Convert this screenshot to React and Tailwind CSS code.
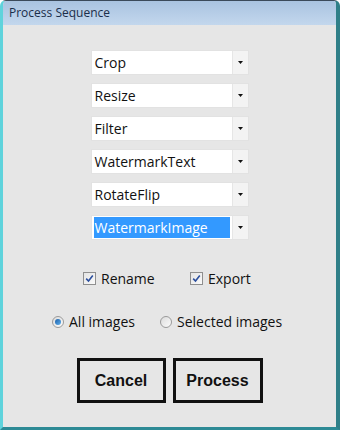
import { useState } from 'react';

const steps = ['Crop', 'Resize', 'Filter', 'WatermarkText', 'RotateFlip', 'WatermarkImage'];

const Dropdown = ({ value, selected }) => (
  <div className="flex h-[25px] w-[158px] items-stretch border border-[#e2e2e2] bg-white">
    <div className="flex flex-1 items-center px-[2px]">
      <span
        className={`flex h-[21px] w-full items-center px-[1px] text-[14px] leading-none ${
          selected ? 'bg-[#3399ff] text-white' : 'text-[#111]'
        }`}
      >
        {value}
      </span>
    </div>
    <div className="flex w-[16px] items-center justify-center border-l border-[#e6e6e6] bg-[#f3f3f3]">
      <svg width="5" height="3" viewBox="0 0 5 3">
        <path d="M0 0H5L2.5 3Z" fill="#111" />
      </svg>
    </div>
  </div>
);

const Checkbox = ({ label, checked }) => (
  <label className="flex items-center gap-[5px] text-[14px] text-[#111]">
    <span className="flex h-[13px] w-[13px] items-center justify-center border border-[#8f8f8f] bg-gradient-to-br from-[#e4e4e4] to-[#fafafa]">
      {checked && (
        <svg width="9" height="9" viewBox="0 0 9 9">
          <path d="M1.2 4.6 3.5 7 7.8 1.6" fill="none" stroke="#2c4f9e" strokeWidth="1.6" />
        </svg>
      )}
    </span>
    {label}
  </label>
);

const Radio = ({ label, checked }) => (
  <label className="flex items-center gap-[5px] text-[14px] text-[#111]">
    <span className="flex h-[12px] w-[12px] items-center justify-center rounded-full border border-[#9a9a9a] bg-gradient-to-br from-[#dcdcdc] to-[#fbfbfb]">
      {checked && <span className="h-[6px] w-[6px] rounded-full bg-gradient-to-br from-[#1a5fa8] to-[#5fb0ee]" />}
    </span>
    {label}
  </label>
);

const App = () => {
  const [values] = useState(steps);

  return (
    <div
      className="flex h-[430px] w-[340px] flex-col overflow-hidden rounded-t-[6px] border-b-[3px] border-l-[3px] border-r-[4px] border-t border-b-[#2d8a95] border-l-[#5fd3dc] border-r-[#2f7f88] border-t-[#3b4a5a] bg-[#e6e6e6]"
      style={{ fontFamily: '"Open Sans", "Noto Sans", sans-serif' }}
    >
      <div className="flex h-[24px] items-center bg-gradient-to-b from-[#a9c3e0] to-[#c3d7ed] px-[6px] text-[12px] text-[#1b2e4a]">
        Process Sequence
      </div>

      <div className="flex flex-1 flex-col items-center pt-[25px]">
        <div className="flex flex-col gap-[8px]">
          {values.map((v, i) => (
            <Dropdown key={v} value={v} selected={i === values.length - 1} />
          ))}
        </div>

        <div className="mt-[28px] flex w-full pl-[80px]">
          <div className="w-[107px]">
            <Checkbox label="Rename" checked />
          </div>
          <Checkbox label="Export" checked />
        </div>

        <div className="mt-[22px] flex w-full pl-[49px]">
          <div className="w-[108px]">
            <Radio label="All images" checked />
          </div>
          <Radio label="Selected images" />
        </div>

        <div className="mt-[26px] flex gap-[7px]">
          <button
            className="h-[45px] w-[89px] border-[3px] border-[#111] bg-[#e6e6e6] text-[16px] font-bold text-[#111]"
            style={{ fontFamily: '"Liberation Sans", Arial, sans-serif' }}
          >
            Cancel
          </button>
          <button
            className="h-[45px] w-[90px] border-[3px] border-[#111] bg-[#e6e6e6] text-[16px] font-bold text-[#111]"
            style={{ fontFamily: '"Liberation Sans", Arial, sans-serif' }}
          >
            Process
          </button>
        </div>
      </div>
    </div>
  );
};

export default App;
